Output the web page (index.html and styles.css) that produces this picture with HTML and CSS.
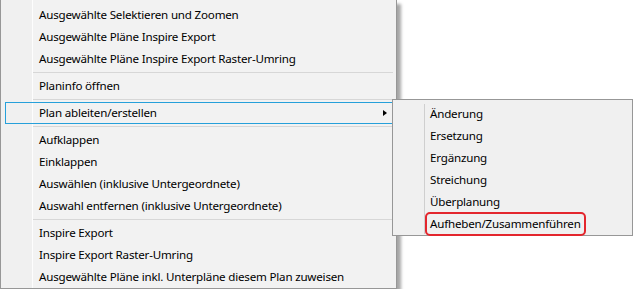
FILE: index.html
```html
<!DOCTYPE html>
<html lang="de">
<head>
  <meta charset="UTF-8">
  <title>Kontextmenü</title>
  <link rel="stylesheet" href="styles.css">
</head>
<body>

  <div class="menu main-menu">
    <div class="item">Ausgewählte Selektieren und Zoomen</div>
    <div class="item">Ausgewählte Pläne Inspire Export</div>
    <div class="item">Ausgewählte Pläne Inspire Export Raster-Umring</div>
    <div class="sep"></div>
    <div class="item">Planinfo öffnen</div>
    <div class="sep"></div>
    <div class="item active">
      Plan ableiten/erstellen
      <span class="arrow"></span>

      <div class="menu sub-menu">
        <div class="sub-item">Änderung</div>
        <div class="sub-item">Ersetzung</div>
        <div class="sub-item">Ergänzung</div>
        <div class="sub-item">Streichung</div>
        <div class="sub-item">Überplanung</div>
        <div class="sub-item">Aufheben/Zusammenführen<span class="mark"></span></div>
      </div>
    </div>
    <div class="sep"></div>
    <div class="item">Aufklappen</div>
    <div class="item">Einklappen</div>
    <div class="item">Auswählen (inklusive Untergeordnete)</div>
    <div class="item">Auswahl entfernen (inklusive Untergeordnete)</div>
    <div class="sep"></div>
    <div class="item">Inspire Export</div>
    <div class="item">Inspire Export Raster-Umring</div>
    <div class="item">Ausgewählte Pläne inkl. Unterpläne diesem Plan zuweisen</div>
  </div>

</body>
</html>
```

FILE: styles.css
```css
body {
  margin: 0;
  background: #fff;
  font-family: 'Noto Sans', sans-serif;
  font-size: 11.6px;
  letter-spacing: -0.2px;
  color: #000;
}

.menu {
  box-sizing: border-box;
  border: 1px solid #979797;
}

.main-menu {
  width: 397px;
  border-top: none;
  padding: 4px 3px 0 4px;
  background: linear-gradient(to right, #f0f0f0 0 31px, #fdfdfd 31px 32px, #f2f2f2 32px);
  box-shadow: 4px 4px 3px rgba(0, 0, 0, 0.35);
}

.item {
  position: relative;
  height: 22px;
  box-sizing: border-box;
  border: 1px solid transparent;
  padding-left: 33px;
  line-height: 20px;
  white-space: nowrap;
}

.item.active {
  border-color: #26a0da;
}

.arrow {
  position: absolute;
  right: 5px;
  top: 7px;
  border-left: 4px solid #000;
  border-top: 3px solid transparent;
  border-bottom: 3px solid transparent;
}

.sep {
  height: 5px;
  margin-left: 28px;
  background: linear-gradient(#d7d7d7, #d7d7d7) 0 2px / 100% 1px no-repeat;
}

.sub-menu {
  position: absolute;
  left: 386px;
  top: -4px;
  width: 241px;
  padding: 3px 2px 0 2px;
  background: #f0f0f0;
}

.sub-menu::before {
  content: "";
  position: absolute;
  left: 31px;
  top: 4px;
  bottom: 1px;
  width: 1px;
  background: #cfcfcf;
}

.sub-item {
  position: relative;
  height: 22px;
  padding-left: 35px;
  line-height: 22px;
  white-space: nowrap;
}

.mark {
  position: absolute;
  left: 30px;
  top: -1px;
  width: 161px;
  height: 24px;
  box-sizing: border-box;
  border: 2px solid #e3262d;
  border-radius: 5px;
}
```
